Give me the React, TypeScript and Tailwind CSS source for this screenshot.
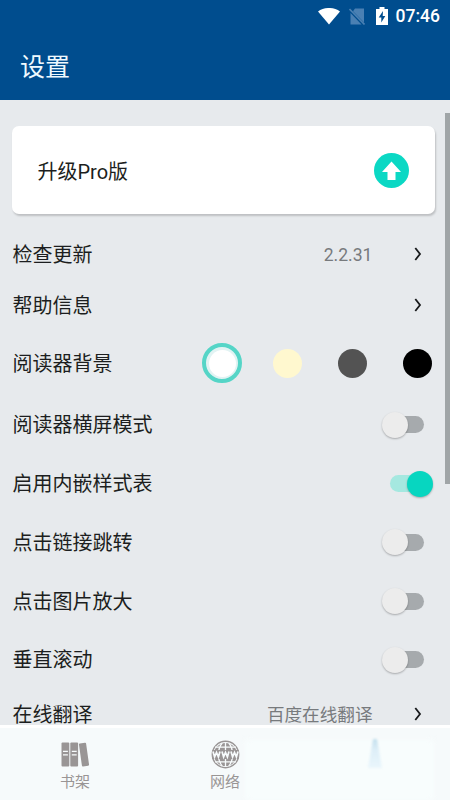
import clsx from 'clsx';
import type { ReactNode } from 'react';

const SWITCHES = [
  { label: '阅读器横屏模式', on: false },
  { label: '启用内嵌样式表', on: true },
  { label: '点击链接跳转', on: false },
  { label: '点击图片放大', on: false },
  { label: '垂直滚动', on: false },
];

function StatusBar() {
  return (
    <div className="flex h-8 items-center justify-end pr-[10px] text-white">
      <svg className="mr-[9px] h-[17px] w-[22px]" viewBox="0 0 22 17" fill="currentColor">
        <path d="M0 3.5C6-1.2 16-1.2 22 3.5L11 16.5Z" />
      </svg>
      <svg className="mr-[11px] h-[17px] w-4" viewBox="0 0 16 17">
        <path d="M6 0.5H15V14.5L4 3.2ZM1.5 5L12.5 16.5H1.5Z" fill="#4a80b3" />
        <path d="M0.5 1L15.5 16.5" stroke="#4a80b3" strokeWidth="1.6" />
      </svg>
      <svg className="mr-[8px] h-[19px] w-3" viewBox="0 0 12 19">
        <path d="M3.5 0H8.5V2H12V18H0V2H3.5Z" fill="currentColor" />
        <path d="M7 4L2.7 10.5H5.3V15.5L9.3 9H6.7Z" fill="#004d8e" />
      </svg>
      <span className="pt-px font-['Roboto'] text-[17.5px] leading-none font-medium">07:46</span>
    </div>
  );
}

function Row({ label, className, children }: { label: string; className: string; children?: ReactNode }) {
  return (
    <div className={clsx('flex shrink-0 items-center justify-between pl-[12.5px]', className)}>
      <span className="pt-px text-[20px] leading-none text-[#1c1e20]">{label}</span>
      {children}
    </div>
  );
}

function Chevron() {
  return (
    <svg className="-mt-px h-[14px] w-2" viewBox="0 0 8 14" fill="none" stroke="#17191b" strokeWidth="1.8">
      <path d="M1.3 1L6 7L1.3 13" />
    </svg>
  );
}

function Link({ label, value }: { label: string; value?: string }) {
  return (
    <Row label={label} className="h-[51px] pr-[28.5px]">
      <div className="flex items-center gap-[41px]">
        {value && <span className="pt-[2px] text-[17.6px] leading-none text-[#777a7d]">{value}</span>}
        <Chevron />
      </div>
    </Row>
  );
}

function Toggle({ on }: { on: boolean }) {
  return (
    <div
      className={clsx(
        'flex h-[17px] w-[34px] items-center rounded-full',
        on ? 'justify-end bg-[#a5e8e0]' : 'bg-[#a6aaad]',
      )}
    >
      <div
        className={clsx(
          'size-[26px] shrink-0 rounded-full shadow-[0_1px_2px_rgba(0,0,0,0.28)]',
          on ? '-mr-[9px] bg-[#07d6c0]' : '-ml-[8px] bg-[#ececec]',
        )}
      />
    </div>
  );
}

function BooksIcon() {
  return (
    <svg className="h-[25px] w-[29px]" viewBox="0 0 29 25" fill="#999595">
      <rect x="0.5" y="0.5" width="7.8" height="24" rx="1" />
      <rect x="9.3" y="0.5" width="7.8" height="24" rx="1" />
      <rect x="19.4" y="1" width="7.2" height="23.2" rx="1" transform="rotate(-8 23 12.6)" />
      <path d="M2 9.3H6.9M2 12.8H6.9M10.8 9.3H15.7M10.8 12.8H15.7" stroke="#f7fbfc" strokeWidth="1.2" />
    </svg>
  );
}

function GlobeIcon() {
  return (
    <svg className="size-[29px]" viewBox="0 0 29 29" fill="none" stroke="#999595">
      <circle cx="14.5" cy="14.5" r="13.2" strokeWidth="1.4" />
      <circle cx="14.5" cy="14.5" r="11.6" fill="#999595" stroke="none" />
      <path
        d="M14.5 2.5V26.5M4 7.2H25M4 21.8H25M11.2 3C6.2 9 6.2 20 11.2 26M17.8 3C22.8 9 22.8 20 17.8 26"
        stroke="#f7fbfc"
        strokeWidth="1.3"
      />
      <path d="M1.2 10H27.8V19H1.2Z" fill="#999595" stroke="none" />
      <path
        d="M2 11.5L3.6 17L5.5 12.5L7.4 17L9 11.5M11 11.5L12.6 17L14.5 12.5L16.4 17L18 11.5M20 11.5L21.6 17L23.5 12.5L25.4 17L27 11.5"
        stroke="#f7fbfc"
        strokeWidth="1.7"
      />
    </svg>
  );
}

function Tab({ icon, label }: { icon: ReactNode; label: string }) {
  return (
    <div className="flex w-[150px] flex-col items-center">
      <div className="flex h-[31px] items-center">{icon}</div>
      <span className="mt-[2px] text-[15px] leading-[20px] text-[#999595]">{label}</span>
    </div>
  );
}

export default function App() {
  return (
    <div className="flex h-[800px] w-[450px] flex-col overflow-hidden bg-[#e7eaed] font-['Roboto','Noto_Sans_CJK_SC',sans-serif]">
      <header className="h-[100px] shrink-0 bg-[#004d8e]">
        <StatusBar />
        <h1 className="pt-[23px] pl-5 text-[25px] leading-[26px] text-[#f0faff]">设置</h1>
      </header>

      <main className="relative flex min-h-0 flex-1 flex-col overflow-hidden pt-[26px]">
        <div className="mx-3 mb-[15px] flex h-[88px] w-[423px] shrink-0 items-center justify-between rounded-[7px] bg-white pr-[26px] pl-[25.5px] shadow-[1px_2px_2px_rgba(0,0,0,0.18)]">
          <span className="pt-[4px] text-[20px] leading-none text-[#1c1e20]">升级Pro版</span>
          <svg className="size-[35px]" viewBox="0 0 35 35">
            <circle cx="17.5" cy="17.5" r="17.5" fill="#0bd8c4" />
            <path d="M17.5 8.5L27 19H21.5V27H13.5V19H8Z" fill="#fff" />
          </svg>
        </div>

        <Link label="检查更新" value="2.2.31" />
        <Link label="帮助信息" />

        <Row label="阅读器背景" className="h-[64.5px] pr-[18px]">
          <div className="flex items-center">
            <div className="mr-[31px] flex size-10 items-center justify-center rounded-full border-4 border-[#55d5c7] bg-[#e2f3f3]">
              <div className="size-[27px] rounded-full bg-white" />
            </div>
            <div className="mr-9 size-[29px] rounded-full bg-[#fff8cf]" />
            <div className="mr-9 size-[29px] rounded-full bg-[#535353]" />
            <div className="size-[29px] rounded-full bg-black" />
          </div>
        </Row>

        {SWITCHES.map(({ label, on }) => (
          <Row key={label} label={label} className="h-[58.75px] pr-[26px]">
            <Toggle on={on} />
          </Row>
        ))}

        <Link label="在线翻译" value="百度在线翻译" />

        <div className="absolute top-[13px] right-0 h-[371px] w-[5px] bg-[#a0a5a7]" />
      </main>

      <nav className="relative flex h-[75px] shrink-0 border-t-[3px] border-white bg-[#f6fafb] pt-[11px]">
        <Tab icon={<BooksIcon />} label="书架" />
        <Tab icon={<GlobeIcon />} label="网络" />
        <div className="absolute top-3 left-[245px] h-[60px] w-[189px] bg-[#f8fdfd] blur-[3px]" />
        <svg className="absolute top-[10px] left-[364px] h-8 w-[22px] blur-[1px]" viewBox="0 0 22 32">
          <defs>
            <linearGradient id="beam" x1="0" y1="0" x2="0" y2="1">
              <stop offset="0" stopColor="#c4e0ed" />
              <stop offset="0.4" stopColor="#deeff8" />
              <stop offset="1" stopColor="#eaf6fc" />
            </linearGradient>
          </defs>
          <path d="M9 1H13L18 30H4Z" fill="url(#beam)" />
        </svg>
      </nav>
    </div>
  );
}
